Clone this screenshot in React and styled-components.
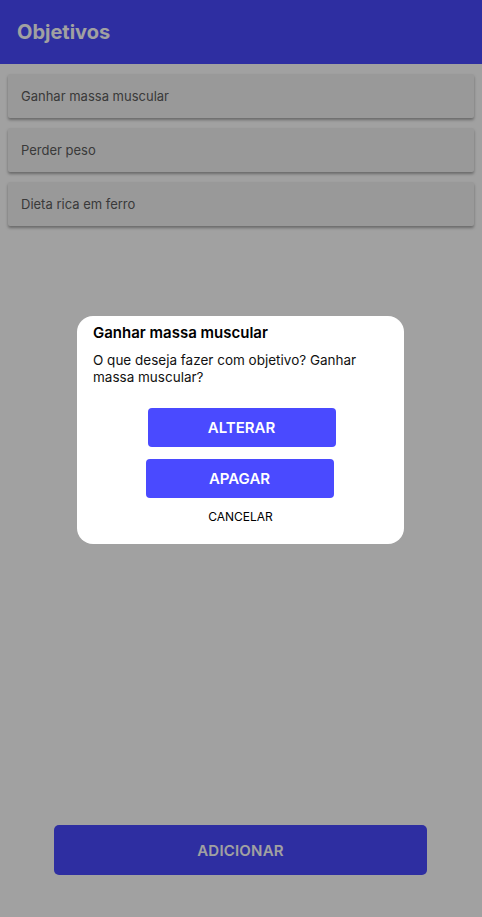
import React from "react";
import styled, { createGlobalStyle } from "styled-components";

const Global = createGlobalStyle`
  html, body { margin: 0; padding: 0; background: #ffffff; }
  body { font-family: Inter, "Noto Sans", sans-serif; }
  #root { min-height: 917px; }
`;

const Screen = styled.div`
  position: relative;
  height: 917px;
  display: flex;
  flex-direction: column;
  background: #ffffff;
`;

const Header = styled.header`
  height: 64px;
  background: #4a4aff;
  display: flex;
  align-items: center;
  padding: 0 17px;
  flex-shrink: 0;
`;

const Title = styled.h1`
  margin: 0;
  color: #ffffff;
  font-size: 20px;
  font-weight: 700;
`;

const List = styled.div`
  display: flex;
  flex-direction: column;
  gap: 10px;
  padding: 10px 8px 0;
  flex: 1;
`;

const Item = styled.div`
  height: 44px;
  background: #f3f3f3;
  border-radius: 2px;
  box-shadow: 0 2px 3px rgba(0, 0, 0, 0.35);
  display: flex;
  align-items: center;
  padding: 0 13px;
  font-size: 13px;
  color: #5c5c5c;
`;

const Footer = styled.div`
  display: flex;
  justify-content: flex-start;
  padding: 0 0 42px 54px;
`;

const AddButton = styled.button`
  width: 373px;
  height: 50px;
  border: none;
  border-radius: 5px;
  background: #4a4aff;
  color: #ffffff;
  font-family: inherit;
  font-size: 15px;
  font-weight: 600;
  letter-spacing: 0.2px;
`;

const Overlay = styled.div`
  position: fixed;
  inset: 0;
  background: rgba(0, 0, 0, 0.37);
  display: flex;
  justify-content: flex-start;
  align-items: flex-start;
  padding: 316px 0 0 77px;
`;

const Dialog = styled.div`
  width: 327px;
  height: 228px;
  box-sizing: border-box;
  background: #ffffff;
  border-radius: 16px;
  padding: 7px 16px 0;
  display: flex;
  flex-direction: column;
`;

const DialogTitle = styled.div`
  font-size: 15px;
  font-weight: 600;
  color: #000;
  line-height: 20px;
`;

const DialogText = styled.div`
  margin-top: 9px;
  font-size: 13.5px;
  line-height: 17px;
  color: #111;
  padding-right: 20px;
`;

const Actions = styled.div`
  margin-top: 22px;
  display: flex;
  flex-direction: column;
  align-items: center;
`;

const ActionButton = styled.button`
  width: 188px;
  height: 39px;
  border: none;
  border-radius: 4px;
  background: #4a4aff;
  color: #ffffff;
  font-family: inherit;
  font-size: 15px;
  font-weight: 600;
  margin-left: ${(p) => p.$shift || 0}px;
  margin-top: ${(p) => p.$top || 0}px;
`;

const TextButton = styled.button`
  margin-top: 11px;
  border: none;
  background: none;
  color: #000;
  font-family: inherit;
  font-size: 12px;
  padding: 0;
`;

export default function App() {
  const items = ["Ganhar massa muscular", "Perder peso", "Dieta rica em ferro"];
  return (
    <>
      <Global />
      <Screen>
        <Header>
          <Title>Objetivos</Title>
        </Header>
        <List>
          {items.map((t) => (
            <Item key={t}>{t}</Item>
          ))}
        </List>
        <Footer>
          <AddButton>ADICIONAR</AddButton>
        </Footer>
        <Overlay>
          <Dialog>
            <DialogTitle>Ganhar massa muscular</DialogTitle>
            <DialogText>O que deseja fazer com objetivo? Ganhar massa muscular?</DialogText>
            <Actions>
              <ActionButton $shift={2}>ALTERAR</ActionButton>
              <ActionButton $shift={-2} $top={12}>APAGAR</ActionButton>
              <TextButton>CANCELAR</TextButton>
            </Actions>
          </Dialog>
        </Overlay>
      </Screen>
    </>
  );
}
